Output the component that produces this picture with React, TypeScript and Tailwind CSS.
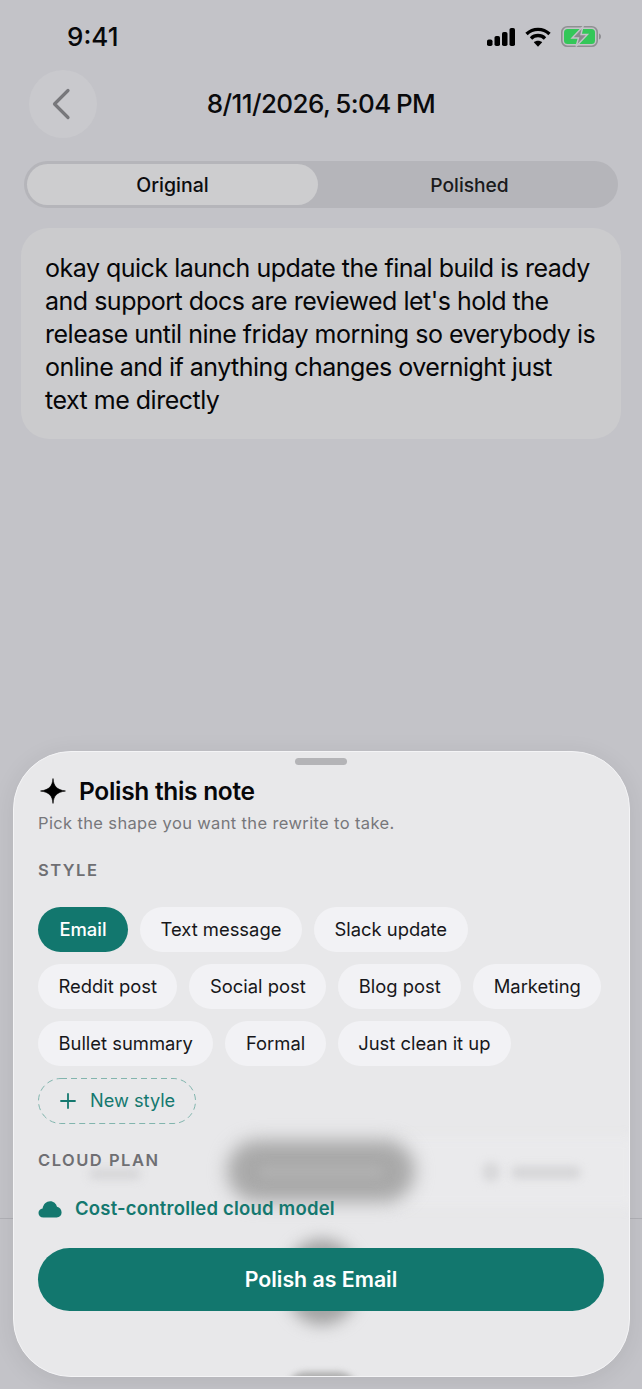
import React from 'react';
import { Plus } from 'lucide-react';

const styles = [
  'Email',
  'Text message',
  'Slack update',
  'Reddit post',
  'Social post',
  'Blog post',
  'Marketing',
  'Bullet summary',
  'Formal',
  'Just clean it up',
];

const StatusIcons = () => (
  <div className="flex items-center">
    <svg width="28" height="18" viewBox="0 0 28 18" fill="#000">
      <rect x="0" y="11.5" width="5.5" height="6.5" rx="1.8" />
      <rect x="7.5" y="8" width="5.5" height="10" rx="1.8" />
      <rect x="15" y="4" width="5.5" height="14" rx="1.8" />
      <rect x="22.5" y="0" width="5.5" height="18" rx="1.8" />
    </svg>
    <svg width="26" height="20" viewBox="0 0 26 20" fill="none" stroke="#000" strokeWidth="3.4" className="ml-[10px]">
      <path d="M1.5 7C8 0.8 18 0.8 24.5 7" />
      <path d="M6 11.4C10 7.6 16 7.6 20 11.4" />
      <path d="M13 19.8L8.8 15.2C11.2 13.2 14.8 13.2 17.2 15.2Z" fill="#000" stroke="none" />
    </svg>
    <svg width="40" height="21" viewBox="0 0 40 21" fill="none" className="ml-[10px]">
      <rect x="0.8" y="0.8" width="35.4" height="19.4" rx="5.5" stroke="#8f8f92" strokeWidth="1.6" />
      <rect x="3" y="3" width="31" height="15" rx="3.5" fill="#34c759" />
      <path d="M38 7.5C39.4 8 40 9 40 10.5S39.4 13 38 13.5Z" fill="#8f8f92" />
      <path d="M22 0.5L11 12H17.5L15 20.5L26.5 8.5H20Z" fill="#8a8a8e" stroke="#c3c3c8" strokeWidth="1.4" />
    </svg>
  </div>
);

const Backdrop = () => (
  <div className="flex flex-col h-full">
    <div className="flex items-center justify-between pl-[67px] pr-[41px] pt-[21px] h-[52px]">
      <span className="text-[26px] font-medium text-[#08080a] leading-none">9:41</span>
      <StatusIcons />
    </div>
    <div className="relative flex items-center justify-center mt-[18px] h-[68px]">
      <div className="absolute left-[29px] top-0 w-[68px] h-[68px] rounded-full bg-[#c9c9cd] flex items-center justify-center">
        <svg width="20" height="32" viewBox="0 0 20 32" fill="none" stroke="#77777b" strokeWidth="3.2" strokeLinecap="round" strokeLinejoin="round" className="mr-[4px]">
          <path d="M17 2.5L3.5 16L17 29.5" />
        </svg>
      </div>
      <span className="mb-[2px] text-[26px] font-medium text-[#0a0a0c] tracking-[-0.6px] [word-spacing:-1px]">8/11/2026, 5:04 PM</span>
    </div>
    <div className="mx-[24px] mt-[23px] h-[47px] rounded-full bg-[#b5b5ba] flex p-[3px]">
      <div className="w-[291px] pt-[2px] rounded-full bg-[#cdcdcf] flex items-center justify-center text-[19.5px] font-medium text-[#0c0c0e]">
        Original
      </div>
      <div className="flex-1 pt-[2px] pl-[6px] flex items-center justify-center text-[19.2px] font-medium text-[#1a1a1c]">
        Polished
      </div>
    </div>
    <div className="mx-[21px] mt-[20px] h-[211px] rounded-[28px] bg-[#cbcbcd] px-[24px] pt-[24px]">
      <p className="text-[25px] leading-[33px] tracking-[-0.5px] text-[#060608]">
        okay quick launch update the final build is ready and support docs are reviewed let's hold the release until
        nine friday morning so everybody is online and if anything changes overnight just text me directly
      </p>
    </div>
    <div className="mt-auto mb-[170px] h-px bg-[#b0b0b5]" />
  </div>
);

const PolishSheet = () => (
  <div className="absolute left-[13px] top-[751px] w-[617px] h-[626px] rounded-[58px] border border-[#f4f4f6] bg-[#e8e8ea] overflow-hidden">
    {/* blurred content showing through the sheet */}
    <div className="absolute left-[380px] top-[385px] w-[240px] h-[70px] bg-[#eaeaec] blur-[6px]" />
    <div className="absolute left-[213px] top-[388px] w-[188px] h-[62px] rounded-full bg-[#a9a9a9] blur-[9px]" />
    <div className="absolute left-[245px] top-[412px] w-[125px] h-[16px] rounded-full bg-[#afafaf] blur-[5px]" />
    <div className="absolute left-[75px] top-[417px] w-[52px] h-[10px] rounded-full bg-[#d4d4d6] blur-[5px]" />
    <div className="absolute left-[468px] top-[410px] w-[18px] h-[20px] rounded-full bg-[#d8d8da] blur-[4px]" />
    <div className="absolute left-[497px] top-[414px] w-[70px] h-[13px] rounded-full bg-[#d6d6d8] blur-[4px]" />
    <div className="absolute left-[273px] top-[487px] w-[70px] h-[86px] rounded-full bg-[#a2a2a2] blur-[8px]" />
    <div className="absolute left-[272px] top-[620px] w-[72px] h-[40px] rounded-full bg-[#acacac] blur-[3px]" />

    <div className="relative flex flex-col h-full pl-[24px] pr-[25px]">
      <div className="mt-[6px] self-center w-[52px] h-[7px] rounded-full bg-[#b4b4b7]" />
      <div className="flex items-center gap-[13px] mt-[11px] h-[30px] pl-[2px]">
        <svg width="26" height="26" viewBox="0 0 24 24" fill="#000">
          <path d="M12 0.5C12.6 7.8 15.6 10.9 23.5 12C15.6 13.1 12.6 16.2 12 23.5C11.4 16.2 8.4 13.1 0.5 12C8.4 10.9 11.4 7.8 12 0.5Z" stroke="#000" strokeWidth="0.6" />
        </svg>
        <h2 className="text-[24.5px] font-semibold text-[#070709] leading-none tracking-[-0.3px]">Polish this note</h2>
      </div>
      <p className="mt-[5px] text-[16.5px] leading-[24px] text-[#77777b] tracking-[0.36px]">
        Pick the shape you want the rewrite to take.
      </p>
      <div className="mt-[24px] text-[16.5px] leading-[22px] font-semibold tracking-[1.5px] text-[#6f6f73]">STYLE</div>
      <div className="flex flex-wrap gap-x-[12px] gap-y-[12px] mt-[26px]">
        {styles.map((name, i) => (
          <div
            key={name}
            className={
              i === 0
                ? 'h-[45px] w-[90px] justify-center rounded-full bg-[#12776e] text-white font-medium text-[18.4px] flex items-center'
                : 'h-[45px] px-[20.5px] rounded-full bg-[#f2f2f5] text-[#17171a] text-[18.4px] flex items-center'
            }
          >
            {name}
          </div>
        ))}
        <div className="relative w-[158px] h-[46px] pl-[18px] text-[#14786f] text-[18.2px] flex items-center gap-[10px]">
          <svg width="158" height="46" className="absolute left-0 top-0" fill="none">
            <rect x="0.5" y="0.5" width="157" height="45" rx="22.5" stroke="#82b5ae" strokeWidth="1" strokeDasharray="6 4" />
          </svg>
          <Plus size={24} strokeWidth={1.8} />
          New style
        </div>
      </div>
      <div className="mt-[25px] text-[16.5px] leading-[22px] font-semibold tracking-[1.5px] text-[#6f6f73]">CLOUD PLAN</div>
      <div className="flex items-center gap-[13px] mt-[26px] h-[24px]">
        <svg width="24" height="18" viewBox="0 0 24 18" fill="#14786f">
          <path d="M5.5 17.5C2.4 17.5 0.5 15.6 0.5 13C0.5 10.6 2.2 8.9 4.6 8.6C5.2 4.2 8.4 1.2 12.2 1.2C15.6 1.2 18.2 3.5 19 6.8C21.8 7.4 23.6 9.8 23.6 12.6C23.6 15.5 21.7 17.5 18.6 17.5Z" />
        </svg>
        <span className="text-[18.5px] font-semibold text-[#14786f] tracking-[0.2px]">Cost-controlled cloud model</span>
      </div>
      <button className="mt-[27px] h-[63px] w-full rounded-full bg-[#12776e] text-white text-[21.3px] font-semibold flex items-center justify-center">
        Polish as Email
      </button>
    </div>
  </div>
);

export default function App() {
  return (
    <div className="relative w-[642px] h-[1389px] overflow-hidden bg-[#c3c3c8] font-['Inter',sans-serif]">
      <Backdrop />
      <div className="absolute left-[13px] top-[751px] w-[617px] h-[626px] rounded-[58px] shadow-[0_4px_24px_rgba(0,0,0,0.08)]" />
      <PolishSheet />
    </div>
  );
}
